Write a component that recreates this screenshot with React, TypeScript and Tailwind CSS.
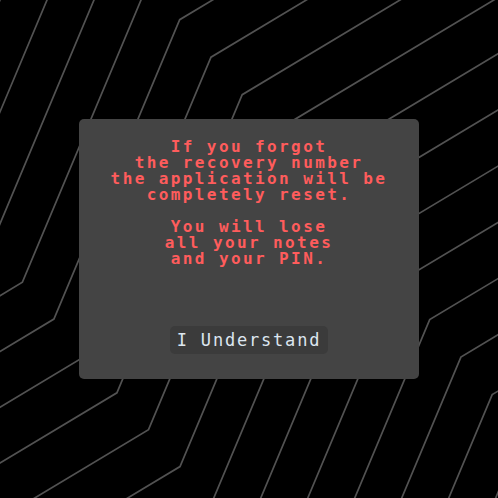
import React from "react";

// steep segment: y = 2.38 * (x0 - x), bends on two diagonals, shallow arms slope 0.6
function buildLines() {
  const steep = 2.38;
  const shallow = 0.6;
  const lines: string[] = [];
  for (let k = -6; k <= 22; k++) {
    const x0 = 47 * k;
    const bx1 = (steep * x0 + 196) / (steep + 1.2);
    const by1 = 1.2 * bx1 - 196;
    const bx2 = (steep * x0 - 256) / (steep + 1.17);
    const by2 = 1.17 * bx2 + 256;
    const pts = [
      [bx2 - 1000, by2 + 1000 * shallow],
      [bx2, by2],
      [bx1, by1],
      [bx1 + 1000, by1 - 1000 * shallow],
    ];
    lines.push(pts.map((p) => `${p[0].toFixed(1)},${p[1].toFixed(1)}`).join(" "));
  }
  return lines;
}

const bgLines = buildLines();

export default function App() {
  const mono = { fontFamily: '"DejaVu Sans Mono", "Liberation Mono", monospace' };

  return (
    <div className="relative w-full h-[498px] bg-black overflow-hidden flex items-center justify-center">
      {/* Background contour lines */}
      <svg className="absolute inset-0" width="498" height="498" viewBox="0 0 498 498">
        {bgLines.map((pts, i) => (
          <polyline key={i} points={pts} fill="none" stroke="#525252" strokeWidth="1.7" />
        ))}
      </svg>

      <div
        className="relative z-10 w-[340px] h-[260px] bg-[#444444] rounded-[5px] flex flex-col items-center pt-[20px] pb-[25px]"
        style={mono}>
        <div className="text-center text-[#ff5c5c] text-[16px] leading-[16px] tracking-[2.4px] font-semibold">
          <p>
            If you forgot
            <br />
            the recovery number
            <br />
            the application will be
            <br />
            completely reset.
          </p>
          <p className="mt-4">
            You will lose
            <br />
            all your notes
            <br />
            and your PIN.
          </p>
        </div>

        <button className="mt-auto h-[28px] px-[7px] rounded-[5px] bg-[#3b3b3b] text-[#dde6f0] text-[17px] leading-[17px] tracking-[1.8px]">
          I Understand
        </button>
      </div>
    </div>
  );
}
